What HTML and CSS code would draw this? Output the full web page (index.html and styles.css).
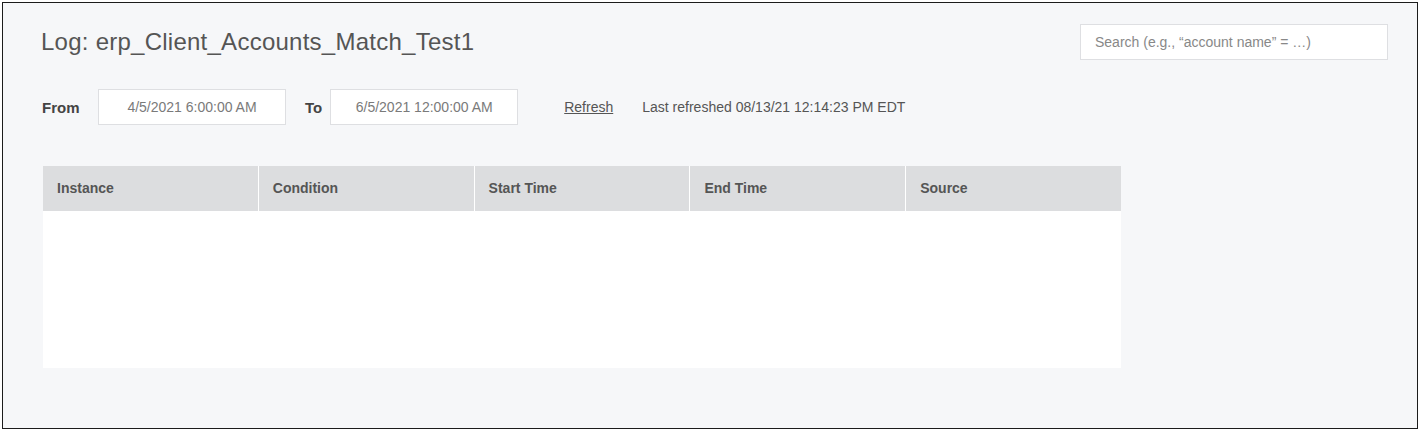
FILE: index.html
```html
<!DOCTYPE html>
<html>
<head>
<meta charset="utf-8">
<link rel="stylesheet" href="styles.css">
</head>
<body>
<div class="frame">
  <div class="top">
    <h1 class="title">Log: erp_Client_Accounts_Match_Test1</h1>
    <div class="search">Search (e.g., “account name” = …)</div>
  </div>
  <div class="filters">
    <span class="label">From</span>
    <div class="date">4/5/2021 6:00:00 AM</div>
    <span class="label to">To</span>
    <div class="date">6/5/2021 12:00:00 AM</div>
    <a class="refresh">Refresh</a>
    <span class="last">Last refreshed 08/13/21 12:14:23 PM EDT</span>
  </div>
  <div class="table">
    <div class="thead">
      <div class="th">Instance</div>
      <div class="th">Condition</div>
      <div class="th">Start Time</div>
      <div class="th">End Time</div>
      <div class="th">Source</div>
    </div>
    <div class="tbody"></div>
  </div>
</div>
</body>
</html>
```
FILE: styles.css
```css
html, body {
  margin: 0;
  padding: 0;
  background: #ffffff;
}
body {
  padding: 2px 0 0 2px;
  font-family: "Liberation Sans", Arial, sans-serif;
  color: #555;
}
.frame {
  box-sizing: border-box;
  width: 1416px;
  height: 427px;
  border: 1px solid #1c1c1c;
  background: #f6f7f9;
  padding: 0 0 0 40px;
}
.top {
  display: flex;
  align-items: flex-start;
  justify-content: space-between;
  padding-right: 29px;
}
.title {
  margin: 25px 0 0 -2px;
  font-size: 24px;
  font-weight: normal;
  letter-spacing: 0.25px;
  color: #555;
  line-height: 28px;
}
.search {
  box-sizing: border-box;
  margin-top: 21px;
  width: 308px;
  height: 36px;
  background: #fff;
  border: 1px solid #dedfe2;
  padding-left: 14px;
  font-size: 14px;
  line-height: 34px;
  color: #888;
}
.filters {
  display: flex;
  align-items: center;
  margin-top: 29px;
  height: 36px;
}
.label {
  font-size: 15px;
  font-weight: bold;
  color: #444;
  width: 56px;
  margin-left: -1px;
}
.label.to {
  width: auto;
  margin: 0 8px 0 19px;
}
.date {
  box-sizing: border-box;
  width: 188px;
  height: 36px;
  background: #fff;
  border: 1px solid #dedfe2;
  text-align: center;
  font-size: 14px;
  line-height: 34px;
  color: #7a7a7a;
}
.refresh {
  margin-left: 46px;
  font-size: 14px;
  color: #555;
  text-decoration: underline;
}
.last {
  margin-left: 29px;
  font-size: 14px;
  color: #555;
}
.table {
  margin-top: 41px;
  width: 1078px;
}
.thead {
  display: grid;
  grid-template-columns: repeat(5, 1fr);
  column-gap: 1px;
  background: #fff;
  height: 45px;
}
.th {
  background: #dcdddf;
  font-size: 14px;
  font-weight: bold;
  color: #555;
  padding-left: 14px;
  line-height: 45px;
}
.tbody {
  height: 157px;
  background: #fff;
}
```
